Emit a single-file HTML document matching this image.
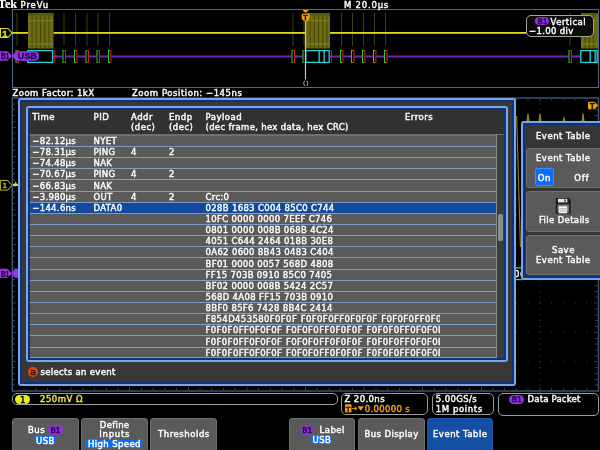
<!DOCTYPE html>
<html><head><meta charset="utf-8"><title>Tek Event Table</title>
<style>
*{box-sizing:border-box;margin:0;padding:0}
html,body{width:600px;height:450px;background:#000;overflow:hidden}
#ui{position:absolute;left:0;top:0;width:600px;height:450px;will-change:transform}
body{position:relative;font-family:"DejaVu Sans","Liberation Sans",sans-serif;font-weight:normal;font-size:8.5px;color:#fafafa;line-height:10px;-webkit-text-stroke:0.45px currentColor;letter-spacing:0.5px}
.a{position:absolute}
.t{position:absolute;white-space:pre;height:10px;line-height:10px;-webkit-text-stroke:0.45px currentColor}
svg{position:absolute;left:0;top:0}
svg text{-webkit-text-stroke:0 transparent;letter-spacing:0}
.row{position:absolute;left:30px;width:465.7px;height:11.14px;background:#5a5a5a;border-top:1px solid #7c9fca}
.row span{position:absolute;top:0.1px;white-space:pre;letter-spacing:0.33px}
.row.sel{background:#124a9e}
.btn{position:absolute;background:#5a5a5a;border:1px solid #6e6e6e;border-radius:3px}
.pill{position:absolute;background:#9030e0;border-radius:5px}
.box{position:absolute;border:1px solid #9a9a9a;border-radius:5px;background:#000}
</style></head><body><div id="ui">
<svg width="600" height="450" viewBox="0 0 600 450">
<rect x="12.5" y="9.5" width="586" height="78" fill="none" stroke="#4c6a8c" stroke-width="1"/>
<rect x="16.5" y="13" width="1" height="33" fill="#3e3e10" />
<rect x="63.5" y="13" width="1" height="33" fill="#3e3e10" />
<rect x="75.0" y="13" width="1" height="33" fill="#3e3e10" />
<rect x="86.5" y="13" width="1" height="33" fill="#3e3e10" />
<rect x="97.5" y="13" width="1" height="33" fill="#3e3e10" />
<rect x="109.0" y="13" width="1" height="33" fill="#3e3e10" />
<rect x="292.5" y="13" width="1" height="33" fill="#3e3e10" />
<rect x="303.5" y="13" width="1" height="33" fill="#3e3e10" />
<rect x="341.0" y="13" width="1" height="33" fill="#3e3e10" />
<rect x="352.0" y="13" width="1" height="33" fill="#3e3e10" />
<rect x="363.0" y="13" width="1" height="33" fill="#3e3e10" />
<rect x="374.0" y="13" width="1" height="33" fill="#3e3e10" />
<rect x="385.0" y="13" width="1" height="33" fill="#3e3e10" />
<rect x="569.5" y="13" width="1" height="33" fill="#3e3e10" />
<rect x="28" y="13" width="25.5" height="35.5" fill="#6c6a12" />
<rect x="31.5" y="13" width="1.2" height="35.5" fill="#4c4a0a" />
<rect x="35.7" y="13" width="1.2" height="35.5" fill="#4c4a0a" />
<rect x="39.900000000000006" y="13" width="1.2" height="35.5" fill="#4c4a0a" />
<rect x="44.10000000000001" y="13" width="1.2" height="35.5" fill="#4c4a0a" />
<rect x="48.30000000000001" y="13" width="1.2" height="35.5" fill="#4c4a0a" />
<rect x="28" y="13" width="25.5" height="2.5" fill="#5a580e" />
<rect x="28" y="20" width="25.5" height="1.2" fill="#807e1c" />
<rect x="28" y="43.5" width="25.5" height="1.2" fill="#807e1c" />
<rect x="306" y="13" width="24" height="35.5" fill="#6c6a12" />
<rect x="309.5" y="13" width="1.2" height="35.5" fill="#4c4a0a" />
<rect x="313.7" y="13" width="1.2" height="35.5" fill="#4c4a0a" />
<rect x="317.9" y="13" width="1.2" height="35.5" fill="#4c4a0a" />
<rect x="322.09999999999997" y="13" width="1.2" height="35.5" fill="#4c4a0a" />
<rect x="326.29999999999995" y="13" width="1.2" height="35.5" fill="#4c4a0a" />
<rect x="306" y="13" width="24" height="2.5" fill="#5a580e" />
<rect x="306" y="20" width="24" height="1.2" fill="#807e1c" />
<rect x="306" y="43.5" width="24" height="1.2" fill="#807e1c" />
<rect x="581" y="13" width="17" height="35.5" fill="#6c6a12" />
<rect x="584.5" y="13" width="1.2" height="35.5" fill="#4c4a0a" />
<rect x="588.7" y="13" width="1.2" height="35.5" fill="#4c4a0a" />
<rect x="592.9000000000001" y="13" width="1.2" height="35.5" fill="#4c4a0a" />
<rect x="581" y="13" width="17" height="2.5" fill="#5a580e" />
<rect x="581" y="20" width="17" height="1.2" fill="#807e1c" />
<rect x="581" y="43.5" width="17" height="1.2" fill="#807e1c" />
<rect x="12" y="32" width="16" height="1.8" fill="#dcda1e" />
<rect x="53.5" y="32" width="252.5" height="1.8" fill="#dcda1e" />
<rect x="330" y="32" width="251" height="1.8" fill="#dcda1e" />
<rect x="12" y="55.5" width="586" height="2" fill="#7622b6" />
<rect x="15.5" y="50" width="3.4" height="13" fill="#000" />
<rect x="15.5" y="50" width="1" height="13" fill="#2ad02a" />
<rect x="17.9" y="50" width="1" height="13" fill="#e02424" />
<rect x="16.5" y="50" width="1" height="1" fill="#a0a828" />
<rect x="16.5" y="62" width="1" height="1" fill="#a0a828" />
<rect x="62.5" y="50" width="3.4" height="13" fill="#000" />
<rect x="62.5" y="50" width="1" height="13" fill="#2ad02a" />
<rect x="64.9" y="50" width="1" height="13" fill="#e02424" />
<rect x="63.5" y="50" width="1" height="1" fill="#a0a828" />
<rect x="63.5" y="62" width="1" height="1" fill="#a0a828" />
<rect x="74.0" y="50" width="3.4" height="13" fill="#000" />
<rect x="74.0" y="50" width="1" height="13" fill="#2ad02a" />
<rect x="76.4" y="50" width="1" height="13" fill="#e02424" />
<rect x="75.0" y="50" width="1" height="1" fill="#a0a828" />
<rect x="75.0" y="62" width="1" height="1" fill="#a0a828" />
<rect x="85.5" y="50" width="3.4" height="13" fill="#000" />
<rect x="85.5" y="50" width="1" height="13" fill="#2ad02a" />
<rect x="87.9" y="50" width="1" height="13" fill="#e02424" />
<rect x="86.5" y="50" width="1" height="1" fill="#a0a828" />
<rect x="86.5" y="62" width="1" height="1" fill="#a0a828" />
<rect x="96.5" y="50" width="3.4" height="13" fill="#000" />
<rect x="96.5" y="50" width="1" height="13" fill="#2ad02a" />
<rect x="98.9" y="50" width="1" height="13" fill="#e02424" />
<rect x="97.5" y="50" width="1" height="1" fill="#a0a828" />
<rect x="97.5" y="62" width="1" height="1" fill="#a0a828" />
<rect x="108.0" y="50" width="3.4" height="13" fill="#000" />
<rect x="108.0" y="50" width="1" height="13" fill="#2ad02a" />
<rect x="110.4" y="50" width="1" height="13" fill="#e02424" />
<rect x="109.0" y="50" width="1" height="1" fill="#a0a828" />
<rect x="109.0" y="62" width="1" height="1" fill="#a0a828" />
<rect x="291.5" y="50" width="3.4" height="13" fill="#000" />
<rect x="291.5" y="50" width="1" height="13" fill="#2ad02a" />
<rect x="293.9" y="50" width="1" height="13" fill="#e02424" />
<rect x="292.5" y="50" width="1" height="1" fill="#a0a828" />
<rect x="292.5" y="62" width="1" height="1" fill="#a0a828" />
<rect x="302.5" y="50" width="3.4" height="13" fill="#000" />
<rect x="302.5" y="50" width="1" height="13" fill="#2ad02a" />
<rect x="304.9" y="50" width="1" height="13" fill="#e02424" />
<rect x="303.5" y="50" width="1" height="1" fill="#a0a828" />
<rect x="303.5" y="62" width="1" height="1" fill="#a0a828" />
<rect x="340.0" y="50" width="3.4" height="13" fill="#000" />
<rect x="340.0" y="50" width="1" height="13" fill="#2ad02a" />
<rect x="342.4" y="50" width="1" height="13" fill="#e02424" />
<rect x="341.0" y="50" width="1" height="1" fill="#a0a828" />
<rect x="341.0" y="62" width="1" height="1" fill="#a0a828" />
<rect x="351.0" y="50" width="3.4" height="13" fill="#000" />
<rect x="351.0" y="50" width="1" height="13" fill="#2ad02a" />
<rect x="353.4" y="50" width="1" height="13" fill="#e02424" />
<rect x="352.0" y="50" width="1" height="1" fill="#a0a828" />
<rect x="352.0" y="62" width="1" height="1" fill="#a0a828" />
<rect x="362.0" y="50" width="3.4" height="13" fill="#000" />
<rect x="362.0" y="50" width="1" height="13" fill="#2ad02a" />
<rect x="364.4" y="50" width="1" height="13" fill="#e02424" />
<rect x="363.0" y="50" width="1" height="1" fill="#a0a828" />
<rect x="363.0" y="62" width="1" height="1" fill="#a0a828" />
<rect x="373.0" y="50" width="3.4" height="13" fill="#000" />
<rect x="373.0" y="50" width="1" height="13" fill="#2ad02a" />
<rect x="375.4" y="50" width="1" height="13" fill="#e02424" />
<rect x="374.0" y="50" width="1" height="1" fill="#a0a828" />
<rect x="374.0" y="62" width="1" height="1" fill="#a0a828" />
<rect x="384.0" y="50" width="3.4" height="13" fill="#000" />
<rect x="384.0" y="50" width="1" height="13" fill="#2ad02a" />
<rect x="386.4" y="50" width="1" height="13" fill="#e02424" />
<rect x="385.0" y="50" width="1" height="1" fill="#a0a828" />
<rect x="385.0" y="62" width="1" height="1" fill="#a0a828" />
<rect x="568.5" y="50" width="3.4" height="13" fill="#000" />
<rect x="568.5" y="50" width="1" height="13" fill="#2ad02a" />
<rect x="570.9" y="50" width="1" height="13" fill="#e02424" />
<rect x="569.5" y="50" width="1" height="1" fill="#a0a828" />
<rect x="569.5" y="62" width="1" height="1" fill="#a0a828" />
<rect x="28" y="50" width="25.5" height="13" fill="#000" />
<rect x="27.8" y="50.6" width="24.9" height="11.8" fill="none" stroke="#22d6da" stroke-width="1.3"/>
<rect x="54.4" y="50" width="1" height="13" fill="#d82020" />
<rect x="306" y="50" width="24" height="13" fill="#000" />
<rect x="305.8" y="50.6" width="23.4" height="11.8" fill="none" stroke="#22d6da" stroke-width="1.3"/>
<rect x="318.5" y="50" width="1.3" height="13" fill="#22d6da" />
<rect x="323.5" y="50" width="1.3" height="13" fill="#22d6da" />
<rect x="330.9" y="50" width="1" height="13" fill="#d82020" />
<rect x="581" y="50" width="17" height="13" fill="#000" />
<rect x="580.8" y="50.6" width="16.4" height="11.8" fill="none" stroke="#22d6da" stroke-width="1.3"/>
<rect x="589.5" y="50" width="1.3" height="13" fill="#22d6da" />
<rect x="594.5" y="50" width="1.3" height="13" fill="#22d6da" />
<rect x="304.9" y="22" width="1.2" height="57.5" fill="#cfc4a4" />
<rect x="12.3" y="98" width="586.2" height="293" fill="none" stroke="#3e5876" stroke-width="1.4"/>
<rect x="13" y="103.5" width="2" height="1" fill="#2a3e58" />
<rect x="595" y="103.5" width="3" height="1" fill="#2a3e58" />
<rect x="13" y="109.0" width="2" height="1" fill="#2a3e58" />
<rect x="595" y="109.0" width="3" height="1" fill="#2a3e58" />
<rect x="13" y="115.0" width="2" height="1" fill="#2a3e58" />
<rect x="595" y="115.0" width="3" height="1" fill="#2a3e58" />
<rect x="13" y="121.0" width="2" height="1" fill="#2a3e58" />
<rect x="595" y="121.0" width="3" height="1" fill="#2a3e58" />
<rect x="13" y="127.0" width="3" height="1" fill="#2a3e58" />
<rect x="594" y="127.0" width="3" height="1" fill="#2a3e58" />
<rect x="13" y="132.5" width="2" height="1" fill="#2a3e58" />
<rect x="595" y="132.5" width="3" height="1" fill="#2a3e58" />
<rect x="13" y="138.5" width="2" height="1" fill="#2a3e58" />
<rect x="595" y="138.5" width="3" height="1" fill="#2a3e58" />
<rect x="13" y="144.5" width="2" height="1" fill="#2a3e58" />
<rect x="595" y="144.5" width="3" height="1" fill="#2a3e58" />
<rect x="13" y="150.0" width="2" height="1" fill="#2a3e58" />
<rect x="595" y="150.0" width="3" height="1" fill="#2a3e58" />
<rect x="13" y="156.0" width="3" height="1" fill="#2a3e58" />
<rect x="594" y="156.0" width="3" height="1" fill="#2a3e58" />
<rect x="13" y="162.0" width="2" height="1" fill="#2a3e58" />
<rect x="595" y="162.0" width="3" height="1" fill="#2a3e58" />
<rect x="13" y="168.0" width="2" height="1" fill="#2a3e58" />
<rect x="595" y="168.0" width="3" height="1" fill="#2a3e58" />
<rect x="13" y="173.5" width="2" height="1" fill="#2a3e58" />
<rect x="595" y="173.5" width="3" height="1" fill="#2a3e58" />
<rect x="13" y="179.5" width="2" height="1" fill="#2a3e58" />
<rect x="595" y="179.5" width="3" height="1" fill="#2a3e58" />
<rect x="13" y="185.5" width="3" height="1" fill="#2a3e58" />
<rect x="594" y="185.5" width="3" height="1" fill="#2a3e58" />
<rect x="13" y="191.5" width="2" height="1" fill="#2a3e58" />
<rect x="595" y="191.5" width="3" height="1" fill="#2a3e58" />
<rect x="13" y="197.0" width="2" height="1" fill="#2a3e58" />
<rect x="595" y="197.0" width="3" height="1" fill="#2a3e58" />
<rect x="13" y="203.0" width="2" height="1" fill="#2a3e58" />
<rect x="595" y="203.0" width="3" height="1" fill="#2a3e58" />
<rect x="13" y="209.0" width="2" height="1" fill="#2a3e58" />
<rect x="595" y="209.0" width="3" height="1" fill="#2a3e58" />
<rect x="13" y="214.5" width="3" height="1" fill="#2a3e58" />
<rect x="594" y="214.5" width="3" height="1" fill="#2a3e58" />
<rect x="13" y="220.5" width="2" height="1" fill="#2a3e58" />
<rect x="595" y="220.5" width="3" height="1" fill="#2a3e58" />
<rect x="13" y="226.5" width="2" height="1" fill="#2a3e58" />
<rect x="595" y="226.5" width="3" height="1" fill="#2a3e58" />
<rect x="13" y="232.5" width="2" height="1" fill="#2a3e58" />
<rect x="595" y="232.5" width="3" height="1" fill="#2a3e58" />
<rect x="13" y="238.0" width="2" height="1" fill="#2a3e58" />
<rect x="595" y="238.0" width="3" height="1" fill="#2a3e58" />
<rect x="13" y="244.0" width="3" height="1" fill="#2a3e58" />
<rect x="594" y="244.0" width="3" height="1" fill="#2a3e58" />
<rect x="13" y="250.0" width="2" height="1" fill="#2a3e58" />
<rect x="595" y="250.0" width="3" height="1" fill="#2a3e58" />
<rect x="13" y="255.5" width="2" height="1" fill="#2a3e58" />
<rect x="595" y="255.5" width="3" height="1" fill="#2a3e58" />
<rect x="13" y="261.5" width="2" height="1" fill="#2a3e58" />
<rect x="595" y="261.5" width="3" height="1" fill="#2a3e58" />
<rect x="13" y="267.5" width="2" height="1" fill="#2a3e58" />
<rect x="595" y="267.5" width="3" height="1" fill="#2a3e58" />
<rect x="13" y="273.5" width="3" height="1" fill="#2a3e58" />
<rect x="594" y="273.5" width="3" height="1" fill="#2a3e58" />
<rect x="13" y="279.0" width="2" height="1" fill="#2a3e58" />
<rect x="595" y="279.0" width="3" height="1" fill="#2a3e58" />
<rect x="13" y="285.0" width="2" height="1" fill="#2a3e58" />
<rect x="595" y="285.0" width="3" height="1" fill="#2a3e58" />
<rect x="13" y="291.0" width="2" height="1" fill="#2a3e58" />
<rect x="595" y="291.0" width="3" height="1" fill="#2a3e58" />
<rect x="13" y="296.5" width="2" height="1" fill="#2a3e58" />
<rect x="595" y="296.5" width="3" height="1" fill="#2a3e58" />
<rect x="13" y="302.5" width="3" height="1" fill="#2a3e58" />
<rect x="594" y="302.5" width="3" height="1" fill="#2a3e58" />
<rect x="13" y="308.5" width="2" height="1" fill="#2a3e58" />
<rect x="595" y="308.5" width="3" height="1" fill="#2a3e58" />
<rect x="13" y="314.5" width="2" height="1" fill="#2a3e58" />
<rect x="595" y="314.5" width="3" height="1" fill="#2a3e58" />
<rect x="13" y="320.0" width="2" height="1" fill="#2a3e58" />
<rect x="595" y="320.0" width="3" height="1" fill="#2a3e58" />
<rect x="13" y="326.0" width="2" height="1" fill="#2a3e58" />
<rect x="595" y="326.0" width="3" height="1" fill="#2a3e58" />
<rect x="13" y="332.0" width="3" height="1" fill="#2a3e58" />
<rect x="594" y="332.0" width="3" height="1" fill="#2a3e58" />
<rect x="13" y="338.0" width="2" height="1" fill="#2a3e58" />
<rect x="595" y="338.0" width="3" height="1" fill="#2a3e58" />
<rect x="13" y="343.5" width="2" height="1" fill="#2a3e58" />
<rect x="595" y="343.5" width="3" height="1" fill="#2a3e58" />
<rect x="13" y="349.5" width="2" height="1" fill="#2a3e58" />
<rect x="595" y="349.5" width="3" height="1" fill="#2a3e58" />
<rect x="13" y="355.5" width="2" height="1" fill="#2a3e58" />
<rect x="595" y="355.5" width="3" height="1" fill="#2a3e58" />
<rect x="13" y="361.0" width="3" height="1" fill="#2a3e58" />
<rect x="594" y="361.0" width="3" height="1" fill="#2a3e58" />
<rect x="13" y="367.0" width="2" height="1" fill="#2a3e58" />
<rect x="595" y="367.0" width="3" height="1" fill="#2a3e58" />
<rect x="13" y="373.0" width="2" height="1" fill="#2a3e58" />
<rect x="595" y="373.0" width="3" height="1" fill="#2a3e58" />
<rect x="13" y="379.0" width="2" height="1" fill="#2a3e58" />
<rect x="595" y="379.0" width="3" height="1" fill="#2a3e58" />
<rect x="13" y="384.5" width="2" height="1" fill="#2a3e58" />
<rect x="595" y="384.5" width="3" height="1" fill="#2a3e58" />
<rect x="23.5" y="98.5" width="1" height="2" fill="#2a3e58" />
<rect x="23.5" y="388" width="1" height="3" fill="#2a3e58" />
<rect x="35.5" y="98.5" width="1" height="2" fill="#2a3e58" />
<rect x="35.5" y="388" width="1" height="3" fill="#2a3e58" />
<rect x="47.0" y="98.5" width="1" height="2" fill="#2a3e58" />
<rect x="47.0" y="388" width="1" height="3" fill="#2a3e58" />
<rect x="59.0" y="98.5" width="1" height="2" fill="#2a3e58" />
<rect x="59.0" y="388" width="1" height="3" fill="#2a3e58" />
<rect x="70.5" y="98.5" width="1" height="3" fill="#2a3e58" />
<rect x="70.5" y="387" width="1" height="3" fill="#2a3e58" />
<rect x="82.5" y="98.5" width="1" height="2" fill="#2a3e58" />
<rect x="82.5" y="388" width="1" height="3" fill="#2a3e58" />
<rect x="94.0" y="98.5" width="1" height="2" fill="#2a3e58" />
<rect x="94.0" y="388" width="1" height="3" fill="#2a3e58" />
<rect x="106.0" y="98.5" width="1" height="2" fill="#2a3e58" />
<rect x="106.0" y="388" width="1" height="3" fill="#2a3e58" />
<rect x="117.5" y="98.5" width="1" height="2" fill="#2a3e58" />
<rect x="117.5" y="388" width="1" height="3" fill="#2a3e58" />
<rect x="129.0" y="98.5" width="1" height="3" fill="#2a3e58" />
<rect x="129.0" y="387" width="1" height="3" fill="#2a3e58" />
<rect x="141.0" y="98.5" width="1" height="2" fill="#2a3e58" />
<rect x="141.0" y="388" width="1" height="3" fill="#2a3e58" />
<rect x="152.5" y="98.5" width="1" height="2" fill="#2a3e58" />
<rect x="152.5" y="388" width="1" height="3" fill="#2a3e58" />
<rect x="164.5" y="98.5" width="1" height="2" fill="#2a3e58" />
<rect x="164.5" y="388" width="1" height="3" fill="#2a3e58" />
<rect x="176.0" y="98.5" width="1" height="2" fill="#2a3e58" />
<rect x="176.0" y="388" width="1" height="3" fill="#2a3e58" />
<rect x="188.0" y="98.5" width="1" height="3" fill="#2a3e58" />
<rect x="188.0" y="387" width="1" height="3" fill="#2a3e58" />
<rect x="199.5" y="98.5" width="1" height="2" fill="#2a3e58" />
<rect x="199.5" y="388" width="1" height="3" fill="#2a3e58" />
<rect x="211.0" y="98.5" width="1" height="2" fill="#2a3e58" />
<rect x="211.0" y="388" width="1" height="3" fill="#2a3e58" />
<rect x="223.0" y="98.5" width="1" height="2" fill="#2a3e58" />
<rect x="223.0" y="388" width="1" height="3" fill="#2a3e58" />
<rect x="234.5" y="98.5" width="1" height="2" fill="#2a3e58" />
<rect x="234.5" y="388" width="1" height="3" fill="#2a3e58" />
<rect x="246.5" y="98.5" width="1" height="3" fill="#2a3e58" />
<rect x="246.5" y="387" width="1" height="3" fill="#2a3e58" />
<rect x="258.0" y="98.5" width="1" height="2" fill="#2a3e58" />
<rect x="258.0" y="388" width="1" height="3" fill="#2a3e58" />
<rect x="270.0" y="98.5" width="1" height="2" fill="#2a3e58" />
<rect x="270.0" y="388" width="1" height="3" fill="#2a3e58" />
<rect x="281.5" y="98.5" width="1" height="2" fill="#2a3e58" />
<rect x="281.5" y="388" width="1" height="3" fill="#2a3e58" />
<rect x="293.5" y="98.5" width="1" height="2" fill="#2a3e58" />
<rect x="293.5" y="388" width="1" height="3" fill="#2a3e58" />
<rect x="305.0" y="98.5" width="1" height="3" fill="#2a3e58" />
<rect x="305.0" y="387" width="1" height="3" fill="#2a3e58" />
<rect x="316.5" y="98.5" width="1" height="2" fill="#2a3e58" />
<rect x="316.5" y="388" width="1" height="3" fill="#2a3e58" />
<rect x="328.5" y="98.5" width="1" height="2" fill="#2a3e58" />
<rect x="328.5" y="388" width="1" height="3" fill="#2a3e58" />
<rect x="340.0" y="98.5" width="1" height="2" fill="#2a3e58" />
<rect x="340.0" y="388" width="1" height="3" fill="#2a3e58" />
<rect x="352.0" y="98.5" width="1" height="2" fill="#2a3e58" />
<rect x="352.0" y="388" width="1" height="3" fill="#2a3e58" />
<rect x="363.5" y="98.5" width="1" height="3" fill="#2a3e58" />
<rect x="363.5" y="387" width="1" height="3" fill="#2a3e58" />
<rect x="375.5" y="98.5" width="1" height="2" fill="#2a3e58" />
<rect x="375.5" y="388" width="1" height="3" fill="#2a3e58" />
<rect x="387.0" y="98.5" width="1" height="2" fill="#2a3e58" />
<rect x="387.0" y="388" width="1" height="3" fill="#2a3e58" />
<rect x="399.0" y="98.5" width="1" height="2" fill="#2a3e58" />
<rect x="399.0" y="388" width="1" height="3" fill="#2a3e58" />
<rect x="410.5" y="98.5" width="1" height="2" fill="#2a3e58" />
<rect x="410.5" y="388" width="1" height="3" fill="#2a3e58" />
<rect x="422.0" y="98.5" width="1" height="3" fill="#2a3e58" />
<rect x="422.0" y="387" width="1" height="3" fill="#2a3e58" />
<rect x="434.0" y="98.5" width="1" height="2" fill="#2a3e58" />
<rect x="434.0" y="388" width="1" height="3" fill="#2a3e58" />
<rect x="445.5" y="98.5" width="1" height="2" fill="#2a3e58" />
<rect x="445.5" y="388" width="1" height="3" fill="#2a3e58" />
<rect x="457.5" y="98.5" width="1" height="2" fill="#2a3e58" />
<rect x="457.5" y="388" width="1" height="3" fill="#2a3e58" />
<rect x="469.0" y="98.5" width="1" height="2" fill="#2a3e58" />
<rect x="469.0" y="388" width="1" height="3" fill="#2a3e58" />
<rect x="481.0" y="98.5" width="1" height="3" fill="#2a3e58" />
<rect x="481.0" y="387" width="1" height="3" fill="#2a3e58" />
<rect x="492.5" y="98.5" width="1" height="2" fill="#2a3e58" />
<rect x="492.5" y="388" width="1" height="3" fill="#2a3e58" />
<rect x="504.0" y="98.5" width="1" height="2" fill="#2a3e58" />
<rect x="504.0" y="388" width="1" height="3" fill="#2a3e58" />
<rect x="516.0" y="98.5" width="1" height="2" fill="#2a3e58" />
<rect x="516.0" y="388" width="1" height="3" fill="#2a3e58" />
<rect x="527.5" y="98.5" width="1" height="2" fill="#2a3e58" />
<rect x="527.5" y="388" width="1" height="3" fill="#2a3e58" />
<rect x="539.5" y="98.5" width="1" height="3" fill="#2a3e58" />
<rect x="539.5" y="387" width="1" height="3" fill="#2a3e58" />
<rect x="551.0" y="98.5" width="1" height="2" fill="#2a3e58" />
<rect x="551.0" y="388" width="1" height="3" fill="#2a3e58" />
<rect x="563.0" y="98.5" width="1" height="2" fill="#2a3e58" />
<rect x="563.0" y="388" width="1" height="3" fill="#2a3e58" />
<rect x="574.5" y="98.5" width="1" height="2" fill="#2a3e58" />
<rect x="574.5" y="388" width="1" height="3" fill="#2a3e58" />
<rect x="586.5" y="98.5" width="1" height="2" fill="#2a3e58" />
<rect x="586.5" y="388" width="1" height="3" fill="#2a3e58" />
<line x1="71" y1="103.36" x2="71" y2="391" stroke="#404040" stroke-width="1" stroke-dasharray="1 4.86"/>
<line x1="130" y1="103.36" x2="130" y2="391" stroke="#404040" stroke-width="1" stroke-dasharray="1 4.86"/>
<line x1="188" y1="103.36" x2="188" y2="391" stroke="#404040" stroke-width="1" stroke-dasharray="1 4.86"/>
<line x1="247" y1="103.36" x2="247" y2="391" stroke="#404040" stroke-width="1" stroke-dasharray="1 4.86"/>
<line x1="306" y1="103.36" x2="306" y2="391" stroke="#404040" stroke-width="1" stroke-dasharray="1 4.86"/>
<line x1="364" y1="103.36" x2="364" y2="391" stroke="#404040" stroke-width="1" stroke-dasharray="1 4.86"/>
<line x1="423" y1="103.36" x2="423" y2="391" stroke="#404040" stroke-width="1" stroke-dasharray="1 4.86"/>
<line x1="481" y1="103.36" x2="481" y2="391" stroke="#404040" stroke-width="1" stroke-dasharray="1 4.86"/>
<line x1="540" y1="103.36" x2="540" y2="391" stroke="#404040" stroke-width="1" stroke-dasharray="1 4.86"/>
<line x1="23.72" y1="127" x2="598" y2="127" stroke="#404040" stroke-width="1" stroke-dasharray="1 10.72"/>
<line x1="23.72" y1="157" x2="598" y2="157" stroke="#404040" stroke-width="1" stroke-dasharray="1 10.72"/>
<line x1="23.72" y1="186" x2="598" y2="186" stroke="#404040" stroke-width="1" stroke-dasharray="1 10.72"/>
<line x1="23.72" y1="215" x2="598" y2="215" stroke="#404040" stroke-width="1" stroke-dasharray="1 10.72"/>
<line x1="23.72" y1="244" x2="598" y2="244" stroke="#404040" stroke-width="1" stroke-dasharray="1 10.72"/>
<line x1="23.72" y1="274" x2="598" y2="274" stroke="#404040" stroke-width="1" stroke-dasharray="1 10.72"/>
<line x1="23.72" y1="303" x2="598" y2="303" stroke="#404040" stroke-width="1" stroke-dasharray="1 10.72"/>
<line x1="23.72" y1="332" x2="598" y2="332" stroke="#404040" stroke-width="1" stroke-dasharray="1 10.72"/>
<line x1="23.72" y1="362" x2="598" y2="362" stroke="#404040" stroke-width="1" stroke-dasharray="1 10.72"/>
<path d="M526.4 122 L527.3 114.5 L528 113.0 L528.7 114.5 L529.6 122 Z" fill="#8a881c"/>
<path d="M538.4 122 L539.3 114.5 L540 113.0 L540.7 114.5 L541.6 122 Z" fill="#8a881c"/>
<path d="M562.4 122 L563.3 118 L564 116.5 L564.7 118 L565.6 122 Z" fill="#8a881c"/>
<path d="M581.4 122 L582.3 114.3 L583 112.8 L583.7 114.3 L584.6 122 Z" fill="#8a881c"/>
<path d="M516.7 116 L520.4 247" stroke="#84861c" stroke-width="1.1" fill="none"/>
<rect x="516" y="267.4" width="6" height="12.6" fill="#000" />
<rect x="516" y="267.2" width="6" height="1.2" fill="#22d6da" />
<rect x="516" y="279" width="6" height="1.2" fill="#22d6da" />
<path d="M13 186 V184.2 L14.6 183.6 L15.6 181.4 L16.6 183.6 L18 184.2 V186 Z" fill="#dcda1e"/>
<ellipse cx="16.5" cy="273.3" rx="4" ry="4.8" fill="#9a34ea"/>
</svg>
<div class="a" style="left:-1.6px;top:-2.3px;font:bold 12.5px/12.5px 'Liberation Serif',serif;color:#fff;-webkit-text-stroke:0.2px #fff;letter-spacing:0;transform:scaleX(.97);transform-origin:0 0;white-space:pre">Tek</div>
<div class="t" style="left:20.6px;top:-0.2px;letter-spacing:0.85px;">PreVu</div>
<div class="t" style="left:344px;top:-0.2px;letter-spacing:0.78px;">M 20.0µs</div>
<div class="box" style="left:525.6px;top:14.5px;width:68.6px;height:22px;background:#0c0c0c;border-color:#a4a498;"></div>
<div class="pill" style="left:535px;top:16.8px;width:14.2px;height:8.6px;"></div>
<div class="t" style="left:537.6px;top:17.0px;color:#24063f;letter-spacing:-0.3px;font-size:7.8px;">B1</div>
<div class="t" style="left:550.6px;top:16.6px;letter-spacing:0.45px;">Vertical</div>
<div class="t" style="left:529px;top:25.9px;letter-spacing:0.35px;">−1.00 div</div>
<div class="t" style="left:12.5px;top:88.2px;letter-spacing:0.45px;">Zoom Factor: 1kX</div>
<div class="t" style="left:132px;top:88.2px;letter-spacing:0.54px;">Zoom Position: −145ns</div>
<div class="a" style="left:515.6px;top:268.4px;width:5.6px;height:10.6px;overflow:hidden"><div class="t" style="left:-1.5px;top:0.2px">0(</div></div>
<div class="a" style="left:18px;top:97.7px;width:498px;height:288.3px;background:#383838;border:2px solid #78a6e8;border-radius:3px"></div>
<div class="a" style="left:20px;top:99.7px;width:494px;height:284.3px;border:2px solid #0e327e;border-radius:1.5px"></div>
<div class="a" style="left:26.2px;top:106px;width:481.8px;height:256px;background:#323232;border:2px solid #78a6e8;border-radius:3px"></div>
<div class="a" style="left:28.2px;top:108px;width:477.8px;height:252px;border:2px solid #0e327e;border-radius:1.5px"></div>
<div class="t" style="left:32.2px;top:112.0px;">Time</div>
<div class="t" style="left:93.5px;top:112.0px;">PID</div>
<div class="t" style="left:131px;top:112.0px;">Addr</div>
<div class="t" style="left:131px;top:121.8px;">(dec)</div>
<div class="t" style="left:169px;top:112.0px;">Endp</div>
<div class="t" style="left:169px;top:121.8px;">(dec)</div>
<div class="t" style="left:205.5px;top:112.0px;">Payload</div>
<div class="t" style="left:205.5px;top:121.8px;letter-spacing:0.32px;">(dec frame, hex data, hex CRC)</div>
<div class="t" style="left:405px;top:112.0px;">Errors</div>
<div class="a" style="left:30px;top:133.5px;width:474px;height:1.5px;background:#6c6c6c;"></div>
<div class="row" style="top:134.90px;border-top-color:#707070"><span style="left:2.200000000000003px">−82.12µs</span><span style="left:63.5px">NYET</span></div>
<div class="row" style="top:146.04px"><span style="left:2.200000000000003px">−78.31µs</span><span style="left:63.5px">PING</span><span style="left:101px">4</span><span style="left:139px">2</span></div>
<div class="row" style="top:157.18px"><span style="left:2.200000000000003px">−74.48µs</span><span style="left:63.5px">NAK</span></div>
<div class="row" style="top:168.32px"><span style="left:2.200000000000003px">−70.67µs</span><span style="left:63.5px">PING</span><span style="left:101px">4</span><span style="left:139px">2</span></div>
<div class="row" style="top:179.46px"><span style="left:2.200000000000003px">−66.83µs</span><span style="left:63.5px">NAK</span></div>
<div class="row" style="top:190.60px"><span style="left:2.200000000000003px">−3.980µs</span><span style="left:63.5px">OUT</span><span style="left:101px">4</span><span style="left:139px">2</span><span style="left:175.5px">Crc:0</span></div>
<div class="row sel" style="top:201.74px"><span style="left:2.200000000000003px">−144.6ns</span><span style="left:63.5px">DATA0</span><span style="left:175.5px">028B 1683 C004 85C0 C744</span></div>
<div class="row" style="top:212.88px"><span style="left:175.5px">10FC 0000 0000 7EEF C746</span></div>
<div class="row" style="top:224.02px"><span style="left:175.5px">0801 0000 008B 068B 4C24</span></div>
<div class="row" style="top:235.16px"><span style="left:175.5px">4051 C644 2464 018B 30E8</span></div>
<div class="row" style="top:246.30px"><span style="left:175.5px">0A62 0600 8B43 0483 C404</span></div>
<div class="row" style="top:257.44px"><span style="left:175.5px">BF01 0000 0057 568D 4808</span></div>
<div class="row" style="top:268.58px"><span style="left:175.5px">FF15 703B 0910 85C0 7405</span></div>
<div class="row" style="top:279.72px"><span style="left:175.5px">BF02 0000 008B 5424 2C57</span></div>
<div class="row" style="top:290.86px"><span style="left:175.5px">568D 4A08 FF15 703B 0910</span></div>
<div class="row" style="top:302.00px"><span style="left:175.5px">8BF0 85F6 7428 8B4C 2414</span></div>
<div class="row" style="top:313.14px"><span style="left:175.5px;width:234.5px;overflow:hidden;letter-spacing:0.38px;word-spacing:0.5px">F854D453580F0F0F F0F0F0FF0F0F0F F0F0F0FF0F0F0F</span></div>
<div class="row" style="top:324.28px"><span style="left:175.5px;width:234.5px;overflow:hidden;letter-spacing:0.38px;word-spacing:0.5px">F0F0F0FF0F0F0F F0F0F0FF0F0F0F F0F0F0FF0F0F0F</span></div>
<div class="row" style="top:335.42px"><span style="left:175.5px;width:234.5px;overflow:hidden;letter-spacing:0.38px;word-spacing:0.5px">F0F0F0FF0F0F0F F0F0F0FF0F0F0F F0F0F0FF0F0F0F</span></div>
<div class="row" style="top:346.56px"><span style="left:175.5px;width:234.5px;overflow:hidden;letter-spacing:0.38px;word-spacing:0.5px">F0F0F0FF0F0F0F F0F0F0FF0F0F0F F0F0F0FF0F0F0F</span></div>
<div class="a" style="left:30px;top:357.2px;width:465.7px;height:1px;background:#7c9fca;"></div>
<div class="a" style="left:495.7px;top:134px;width:1.3px;height:224px;background:#8a8a8a;"></div>
<div class="a" style="left:497px;top:135px;width:7px;height:223px;background:#3c3c3c;"></div>
<div class="a" style="left:497.5px;top:214px;width:5.5px;height:27px;background:#8e8e8e;border-radius:1.5px"></div>
<div class="a" style="left:27.8px;top:367px;width:10.3px;height:10.3px;background:#e4440f;border-radius:5.2px"></div>
<div class="t" style="left:30.3px;top:367.0px;color:#360800;letter-spacing:0px;font-size:9.5px;">a</div>
<div class="t" style="left:40.5px;top:367.3px;letter-spacing:0.33px;">selects an event</div>
<div class="a" style="left:520.8px;top:120.8px;width:84px;height:159.6px;background:#363636;border:2px solid #78a6e8;border-radius:3px"></div>
<div class="a" style="left:522.8px;top:122.8px;width:82px;height:155.6px;border:2px solid #0e327e;border-radius:1.5px"></div>
<div class="t" style="left:536px;top:131.2px;">Event Table</div>
<div class="btn" style="left:526px;top:147.5px;width:76px;height:40.5px;"></div>
<div class="t" style="left:536px;top:152.8px;">Event Table</div>
<div class="a" style="left:535.2px;top:167.7px;width:19.2px;height:18.7px;background:#0c6cf2;border-radius:2px;border:1px solid #3c8cff"></div>
<div class="t" style="left:537.8px;top:172.8px;color:#fff;letter-spacing:0.6px;">On</div>
<div class="t" style="left:574.3px;top:172.8px;letter-spacing:0.7px;">Off</div>
<div class="btn" style="left:526px;top:190.5px;width:76px;height:41.5px;"></div>
<div class="t" style="left:539px;top:215.3px;letter-spacing:0.35px;">File Details</div>
<div class="btn" style="left:526px;top:234.5px;width:76px;height:40.5px;"></div>
<div class="t" style="left:552px;top:245.0px;">Save</div>
<div class="t" style="left:536px;top:254.8px;">Event Table</div>
<div class="box" style="left:11.5px;top:392.5px;width:326px;height:12.5px;"></div>
<div class="a" style="left:15px;top:395px;width:15px;height:8.5px;background:#eaea20;border-radius:4.5px"></div>
<div class="t" style="left:20px;top:395.2px;color:#000;letter-spacing:0px;font-size:8.5px;">1</div>
<div class="t" style="left:40px;top:394.0px;color:#e6e632;">250mV Ω</div>
<div class="box" style="left:341.3px;top:392.5px;width:86.5px;height:22.5px;"></div>
<div class="t" style="left:344.5px;top:394.0px;letter-spacing:0.4px;">Z 20.0ns</div>
<div class="t" style="left:364.7px;top:403.6px;color:#f0a020;letter-spacing:0.33px;">0.00000 s</div>
<div class="box" style="left:431.8px;top:392.5px;width:62.6px;height:22.5px;"></div>
<div class="t" style="left:435.8px;top:394.0px;letter-spacing:0.4px;">5.00GS/s</div>
<div class="t" style="left:435.8px;top:403.6px;letter-spacing:0.6px;">1M points</div>
<div class="box" style="left:498.2px;top:392.5px;width:100.8px;height:23px;"></div>
<div class="pill" style="left:509px;top:394.5px;width:15px;height:9px;"></div>
<div class="t" style="left:512px;top:395.0px;color:#24063f;letter-spacing:-0.3px;font-size:7.8px;">B1</div>
<div class="t" style="left:527.5px;top:394.0px;letter-spacing:0.2px;">Data Packet</div>
<div class="btn" style="left:12px;top:418px;width:66.5px;height:36px;"></div>
<div class="t" style="left:28px;top:424.8px;">Bus</div>
<div class="pill" style="left:47.5px;top:425px;width:15px;height:9.5px;"></div>
<div class="t" style="left:50.4px;top:425.7px;color:#24063f;letter-spacing:-0.3px;font-size:7.8px;">B1</div>
<div class="a" style="left:35px;top:435.3px;width:20.5px;height:8.6px;background:#0c6cf2;"></div>
<div class="t" style="left:36px;top:435.6px;color:#fff;">USB</div>
<div class="btn" style="left:81px;top:418px;width:66.5px;height:36px;"></div>
<div class="t" style="left:99.8px;top:419.5px;letter-spacing:0.3px;">Define</div>
<div class="t" style="left:99.3px;top:429.4px;letter-spacing:0.75px;">Inputs</div>
<div class="a" style="left:86px;top:440px;width:55.3px;height:7.8px;background:#0c6cf2;"></div>
<div class="t" style="left:88px;top:439.1px;color:#fff;letter-spacing:0.4px;">High Speed</div>
<div class="btn" style="left:150px;top:418px;width:67px;height:36px;"></div>
<div class="t" style="left:158px;top:429.3px;letter-spacing:0.55px;">Thresholds</div>
<div class="btn" style="left:288.5px;top:418px;width:66.5px;height:36px;"></div>
<div class="pill" style="left:301px;top:425px;width:12px;height:9.5px;"></div>
<div class="t" style="left:302.2px;top:425.7px;color:#24063f;letter-spacing:-0.3px;font-size:7.8px;">B1</div>
<div class="t" style="left:319.5px;top:424.8px;">Label</div>
<div class="a" style="left:311px;top:435.3px;width:21px;height:8.5px;background:#0c6cf2;"></div>
<div class="t" style="left:312.5px;top:435.3px;color:#fff;">USB</div>
<div class="btn" style="left:357.5px;top:418px;width:67px;height:36px;"></div>
<div class="t" style="left:364.5px;top:428.8px;letter-spacing:0.4px;">Bus Display</div>
<div class="btn" style="left:427px;top:418px;width:66px;height:36px;background:#144fa4;border-color:#1a58b0;"></div>
<div class="t" style="left:433px;top:428.8px;">Event Table</div>
<svg width="600" height="450" viewBox="0 0 600 450">
<path d="M0.5 28.5 H8 L12 33 L8 37.5 H0.5 Z" fill="#000" stroke="#dcda1e" stroke-width="1.1"/>
<text x="2.2" y="36.5" font-family="Liberation Sans,sans-serif" font-weight="bold" font-size="9.5" fill="#dcda1e" stroke="#dcda1e" stroke-width="0.4">1</text>
<path d="M0 51.2 H6.5 Q8.5 51.2 9.2 53 L12 56 L9.2 59 Q8.5 60.8 6.5 60.8 H0 Z" fill="#9a34ea"/>
<text transform="translate(0.7,59.4) scale(0.74,1)" font-family="Liberation Sans,sans-serif" font-weight="bold" font-size="9.2" fill="#2c0850" stroke="#2c0850" stroke-width="0.35">B1</text>
<path d="M12 56 L15 52.6 Q16 51.2 18 51.2 H34.2 Q39 51.2 39 56 Q39 60.8 34.2 60.8 H18 Q16 60.8 15 59.4 Z" fill="#9a34ea"/>
<text x="17.6" y="59.4" font-family="Liberation Sans,sans-serif" font-weight="bold" font-size="9.2" fill="#260650" stroke="#260650" stroke-width="0.35" style="letter-spacing:0px">USB</text>
<path d="M302.3 10 H308.9 L305.6 13 Z" fill="#f0a018"/>
<path d="M302.5 13.7 H308.9 Q309.7 13.7 309.7 14.5 V19 L305.7 22.3 L301.7 19 V14.5 Q301.7 13.7 302.5 13.7 Z" fill="#f0a018"/>
<text x="303.1" y="20.3" font-family="Liberation Sans,sans-serif" font-weight="bold" font-size="8" fill="#301800" stroke="#301800" stroke-width="0.3">T</text>
<path d="M304.6 80.6 Q302.6 83.3 304.6 86 M306.9 80.6 Q308.9 83.3 306.9 86" stroke="#a8a8a8" stroke-width="1" fill="none"/>
<path d="M0.4 180.5 H7.8 L11.8 185.3 L7.8 190.1 H0.4 Z" fill="#000" stroke="#d0ce1c" stroke-width="0.9"/>
<text x="2.6" y="188.1" font-family="Liberation Sans,sans-serif" font-weight="bold" font-size="8" fill="#dcda1e">1</text>
<path d="M0 268.7 H6.5 Q8.5 268.7 9.2 270.5 L12 273.4 L9.2 276.3 Q8.5 278 6.5 278 H0 Z" fill="#9a34ea"/>
<text transform="translate(0.7,276.7) scale(0.74,1)" font-family="Liberation Sans,sans-serif" font-weight="bold" font-size="9.2" fill="#2c0850" stroke="#2c0850" stroke-width="0.35">B1</text>
<path d="M588 102.5 Q588 101.7 589 101.7 H594.5 L598 105.5 L594.5 109.3 H589 Q588 109.3 588 108.5 Z" fill="#f0a018"/>
<text x="589.7" y="108.6" font-family="Liberation Sans,sans-serif" font-weight="bold" font-size="8.5" fill="#2a1400" stroke="#2a1400" stroke-width="0.4">T</text>
<path d="M555.7 198 H568.8 L570.7 199.8 V213.7 H555.7 Z" fill="#1e1e1e"/>
<rect x="557.5" y="204.5" width="11.4" height="8.2" fill="#7a7a7a"/>
<rect x="558" y="198.8" width="9.3" height="3.6" fill="#e6e6e6"/>
<rect x="564.3" y="199.3" width="1.5" height="2.6" fill="#444"/>
<rect x="558.8" y="206.3" width="8.3" height="7" fill="#f4f4f4"/>
<rect x="559.5" y="208.3" width="7" height="1" fill="#aaa"/>
<rect x="559.5" y="210.5" width="7" height="1" fill="#aaa"/>
<rect x="345" y="404.3" width="6.5" height="8.2" rx="1" fill="#f0a018"/>
<text x="345.8" y="411.5" font-family="Liberation Sans,sans-serif" font-weight="bold" font-size="8" fill="#2a1400" stroke="#2a1400" stroke-width="0.3">T</text>
<path d="M352 408.4 H356.5 M354.8 406.6 L356.8 408.4 L354.8 410.2" stroke="#f0a018" stroke-width="1" fill="none"/>
<path d="M357.5 406.3 H364 L360.75 410.8 Z" fill="#f0a018"/>
</svg>
</div></body></html>
